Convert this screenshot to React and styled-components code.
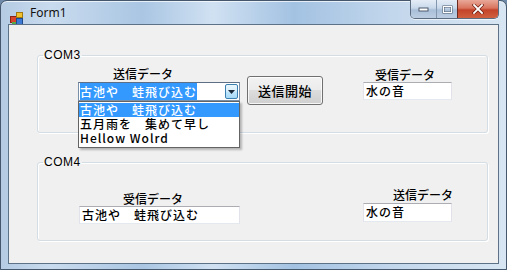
import React from "react";
import styled, { createGlobalStyle } from "styled-components";

const GlobalStyle = createGlobalStyle`
  html, body {
    margin: 0;
    padding: 0;
    background: #6f8aa8;
  }
  body {
    width: 507px;
    height: 270px;
    overflow: hidden;
    font-family: "Noto Sans CJK JP", "Liberation Sans", sans-serif;
    font-weight: 500;
  }
`;

const items = ["古池や　蛙飛び込む", "五月雨を　集めて早し", "Hellow Wolrd"];

const FormIcon = () => (
  <svg width="14" height="13" viewBox="0 0 14 13">
    <rect x="0.5" y="4.5" width="6" height="6" fill="#d8432c" stroke="#8a2418" />
    <rect x="6.5" y="0.5" width="6" height="5" fill="#f2c12e" stroke="#a07a10" />
    <rect x="6.5" y="6.5" width="6" height="6" fill="#3d7ad6" stroke="#1f4a8c" />
    <rect x="2" y="10" width="4" height="3" fill="#58a846" />
  </svg>
);

const MinGlyph = () => (
  <svg width="11" height="6" viewBox="0 0 11 6">
    <rect x="1" y="2" width="9" height="3" fill="#fff" stroke="#4c5a6c" />
  </svg>
);

const MaxGlyph = () => (
  <svg width="11" height="9" viewBox="0 0 11 9">
    <rect x="1.5" y="1.5" width="8" height="6" fill="none" stroke="#4c5a6c" strokeWidth="2" />
    <rect x="1.5" y="1.5" width="8" height="6" fill="none" stroke="#fff" strokeWidth="1" />
  </svg>
);

const CloseGlyph = () => (
  <svg width="12" height="10" viewBox="0 0 12 10">
    <path d="M2 1 L10 9 M10 1 L2 9" stroke="#6b1c10" strokeWidth="3.2" strokeLinecap="square" />
    <path d="M2 1 L10 9 M10 1 L2 9" stroke="#fff" strokeWidth="1.8" strokeLinecap="square" />
  </svg>
);

const DropArrow = () => (
  <svg width="7" height="4" viewBox="0 0 7 4">
    <path d="M0 0 L7 0 L3.5 4 Z" fill="#1c2a3a" />
  </svg>
);

const App = () => {
  return (
    <>
      <GlobalStyle />
      <Window>
        <TitleBar>
          <IconSlot>
            <FormIcon />
          </IconSlot>
          <Title>Form1</Title>
          <CaptionButtons>
            <CaptionButton $width={25}>
              <MinGlyph />
            </CaptionButton>
            <CaptionButton $width={21}>
              <MaxGlyph />
            </CaptionButton>
            <CaptionButton $width={41} $close>
              <CloseGlyph />
            </CaptionButton>
          </CaptionButtons>
        </TitleBar>
        <Client>
          <GroupBox>
            <Legend>COM3</Legend>
            <GroupRow $height={70}>
              <Column $width={162} $gap={40}>
                <FieldLabel $indent={35} $top={5}>
                  送信データ
                </FieldLabel>
                <Combo>
                  <ComboEdit>
                    <Selected>{items[0]}</Selected>
                  </ComboEdit>
                  <DropButton>
                    <DropArrow />
                  </DropButton>
                  <DropList>
                    {items.map((t, i) => (
                      <DropItem key={t} $active={i === 0}>
                        {t}
                      </DropItem>
                    ))}
                  </DropList>
                </Combo>
              </Column>
              <PushButton>送信開始</PushButton>
              <Column $width={89} $gap={40}>
                <FieldLabel $indent={12} $top={6}>
                  受信データ
                </FieldLabel>
                <TextBox $height={18}>水の音</TextBox>
              </Column>
            </GroupRow>
          </GroupBox>

          <GroupBox $spaced>
            <Legend>COM4</Legend>
            <GroupRow $height={71}>
              <Column $width={161} $gap={41}>
                <FieldLabel $indent={44} $top={23}>
                  受信データ
                </FieldLabel>
                <TextBox $height={18}>古池や　蛙飛び込む</TextBox>
              </Column>
              <Column $width={89} $gap={123}>
                <FieldLabel $indent={30} $top={19}>
                  送信データ
                </FieldLabel>
                <TextBox $height={19} $top={1}>
                  水の音
                </TextBox>
              </Column>
            </GroupRow>
          </GroupBox>
        </Client>
      </Window>
    </>
  );
};

export default App;

const Window = styled.div`
  box-sizing: border-box;
  width: 507px;
  height: 270px;
  display: flex;
  flex-direction: column;
  padding: 0 7px 5px 7px;
  border: 1px solid #44576d;
  border-radius: 7px 7px 0 0;
  background: linear-gradient(
    90deg,
    #b4cbe3 0%,
    #c9dbee 10%,
    #aac6e3 28%,
    #d0e1f2 42%,
    #a3c2e2 58%,
    #c3d7ec 78%,
    #d8e6f3 100%
  );
  box-shadow: inset 0 1px 0 rgba(255, 255, 255, 0.7);
`;

const TitleBar = styled.div`
  height: 23px;
  display: flex;
  align-items: flex-start;
`;

const IconSlot = styled.div`
  margin: 5px 0 0 2px;
  width: 14px;
  height: 13px;
`;

const Title = styled.div`
  margin: 4px 0 0 6px;
  font-family: "Noto Sans", "Liberation Sans", sans-serif;
  font-weight: 400;
  font-size: 12px;
  line-height: 16px;
  color: #111;
`;

const CaptionButtons = styled.div`
  margin-left: auto;
  margin-top: -1px;
  display: flex;
  height: 18px;
  border: 1px solid #5b6b80;
  border-top: none;
  border-radius: 0 0 5px 5px;
  overflow: hidden;
  box-shadow: 0 1px 0 rgba(255, 255, 255, 0.6);
`;

const CaptionButton = styled.div`
  width: ${({ $width }) => $width}px;
  height: 100%;
  display: flex;
  align-items: center;
  justify-content: center;
  box-sizing: border-box;
  border-left: ${({ $close }) => ($close ? "1px solid #6a2a20" : "1px solid #8296ad")};
  background: ${({ $close }) =>
    $close
      ? "linear-gradient(#e9a899 0%, #d9745e 45%, #c4432a 55%, #d0603f 100%)"
      : "linear-gradient(#e4edf6 0%, #c8d8ea 45%, #a9bfd8 55%, #bccde2 100%)"};
  &:first-child {
    border-left: none;
  }
`;

const Client = styled.div`
  flex: 1;
  display: flex;
  flex-direction: column;
  border: 1px solid #5d7187;
  background: #f0f0f0;
  padding: 23px 10px 0 28px;
`;

const GroupBox = styled.fieldset`
  margin: ${({ $spaced }) => ($spaced ? "22px" : "0")} 0 0 0;
  padding: 0;
  min-width: 0;
  border: 1px solid #d5dde4;
  border-radius: 3px;
  box-shadow: inset 1px 1px 0 #ffffff, 1px 1px 0 #ffffff;
`;

const Legend = styled.legend`
  margin-left: 5px;
  padding: 0 1px;
  font-family: "Liberation Sans", "Noto Sans CJK JP", sans-serif;
  font-size: 12px;
  line-height: 14px;
  letter-spacing: 0.5px;
  color: #000;
`;

const GroupRow = styled.div`
  height: ${({ $height }) => $height}px;
  display: flex;
  align-items: flex-start;
`;

const Column = styled.div`
  width: ${({ $width }) => $width}px;
  margin-left: ${({ $gap }) => $gap}px;
  display: flex;
  flex-direction: column;
`;

const FieldLabel = styled.div`
  margin: ${({ $top }) => $top}px 0 0 ${({ $indent }) => $indent}px;
  font-size: 12px;
  line-height: 14px;
  color: #000;
  white-space: nowrap;
`;

const TextBox = styled.div`
  box-sizing: border-box;
  height: ${({ $height }) => $height}px;
  margin-top: ${({ $top }) => $top || 0}px;
  padding: 0 2px;
  background: #fff;
  border: 1px solid #e2e3ea;
  border-top-color: #abadb3;
  border-bottom-color: #e3e9ef;
  font-size: 12px;
  letter-spacing: 1px;
  line-height: 16px;
  color: #000;
  white-space: nowrap;
`;

const Combo = styled.div`
  position: relative;
  box-sizing: border-box;
  height: 19px;
  margin-top: 1px;
  display: flex;
  align-items: center;
  background: #fff;
  border: 1px solid #7a8fa8;
  border-top-color: #5c6f86;
`;

const ComboEdit = styled.div`
  flex: 1;
  padding-left: 1px;
  font-size: 12px;
  letter-spacing: 1px;
  line-height: 15px;
  white-space: nowrap;
`;

const Selected = styled.span`
  background: #3399ff;
  color: #fff;
`;

const DropButton = styled.div`
  box-sizing: border-box;
  width: 13px;
  height: 15px;
  margin-right: 1px;
  display: flex;
  align-items: center;
  justify-content: center;
  border: 1px solid #3c7fb1;
  border-radius: 2px;
  background: linear-gradient(#eaf6fd 0%, #d9f0fc 45%, #bee6fd 55%, #a7d9f5 100%);
`;

const DropList = styled.div`
  position: absolute;
  top: 18px;
  left: -1px;
  width: 162px;
  box-sizing: border-box;
  padding: 1px 0 2px;
  background: #fff;
  border: 1px solid #646464;
  box-shadow: 2px 2px 2px rgba(0, 0, 0, 0.25);
  z-index: 2;
`;

const DropItem = styled.div`
  height: 14px;
  padding-left: 1px;
  font-size: 12px;
  letter-spacing: 1px;
  line-height: 14px;
  white-space: nowrap;
  background: ${({ $active }) => ($active ? "#3399ff" : "transparent")};
  color: ${({ $active }) => ($active ? "#fff" : "#000")};
`;

const PushButton = styled.div`
  box-sizing: border-box;
  width: 76px;
  height: 29px;
  margin: 14px 0 0 7px;
  display: flex;
  align-items: center;
  justify-content: center;
  border: 1px solid #707070;
  border-radius: 3px;
  background: linear-gradient(#f2f2f2 0%, #ebebeb 49%, #dddddd 50%, #cfcfcf 100%);
  box-shadow: inset 0 0 0 1px rgba(255, 255, 255, 0.8);
  font-size: 13px;
  color: #000;
  letter-spacing: 0.5px;
`;
